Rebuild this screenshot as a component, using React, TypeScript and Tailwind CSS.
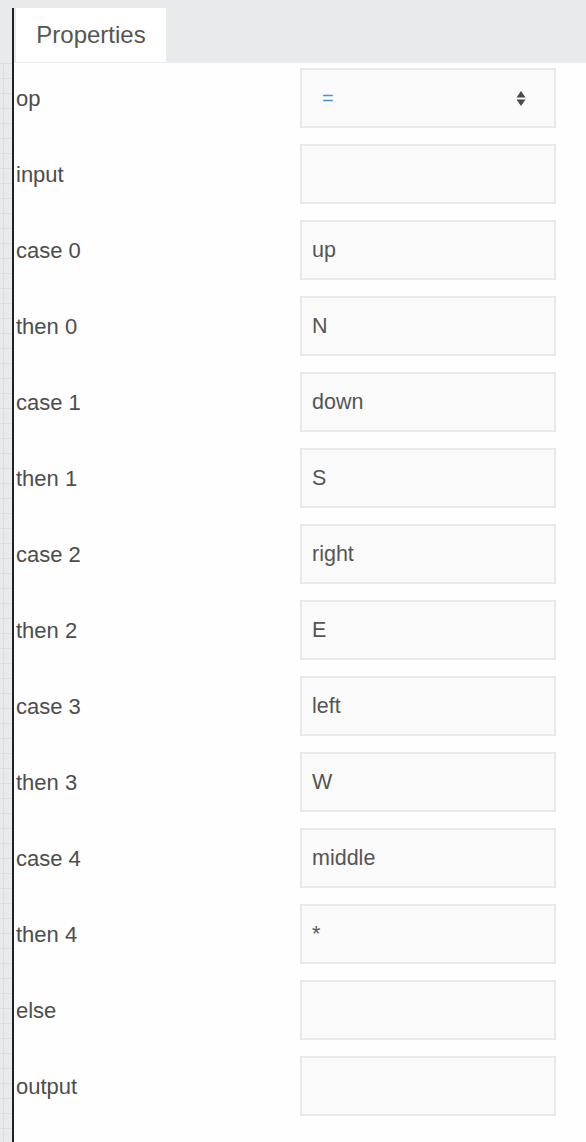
const rows: { label: string; value: string; select?: boolean }[] = [
  { label: 'op', value: '=', select: true },
  { label: 'input', value: '' },
  { label: 'case 0', value: 'up' },
  { label: 'then 0', value: 'N' },
  { label: 'case 1', value: 'down' },
  { label: 'then 1', value: 'S' },
  { label: 'case 2', value: 'right' },
  { label: 'then 2', value: 'E' },
  { label: 'case 3', value: 'left' },
  { label: 'then 3', value: 'W' },
  { label: 'case 4', value: 'middle' },
  { label: 'then 4', value: '*' },
  { label: 'else', value: '' },
  { label: 'output', value: '' },
];

const SortArrows = () => (
  <svg width="10" height="17" viewBox="0 0 10 17" className="text-[#4a4a4a]">
    <path d="M5 1 L9.5 7.5 H0.5 Z" fill="currentColor" />
    <path d="M0.5 9.5 H9.5 L5 16 Z" fill="currentColor" />
  </svg>
);

const Row = ({ label, value, select }: { label: string; value: string; select?: boolean }) => {
  return (
    <div className="flex items-center h-[60px]">
      <div className="w-[286px] pl-[2px] text-[22px] text-[#4d4d4d]">{label}</div>
      {select ? (
        <div className="w-[256px] h-[60px] border-2 border-[#e9e9e9] bg-[#fafafa] flex items-center pl-[20px] pr-[28px]">
          <span className="text-[20px] text-[#4a90e2] flex-grow">{value}</span>
          <SortArrows />
        </div>
      ) : (
        <div className="w-[256px] h-[60px] border-2 border-[#e9e9e9] bg-[#fafafa] flex items-center pl-[10px] text-[21.5px] text-[#555]">
          {value}
        </div>
      )}
    </div>
  );
};

export default function App() {
  return (
    <div
      className="w-[586px] h-[1142px] flex bg-[#e9eaec] overflow-hidden"
      style={{ fontFamily: '"Liberation Sans", Arial, sans-serif' }}
    >
      {/* canvas strip on the left */}
      <div className="w-[12px] flex flex-col">
        <div className="h-[63px]" />
        <div className="flex-grow bg-[#e9eaec] bg-[linear-gradient(#dddee1_1px,transparent_1px),linear-gradient(90deg,#dddee1_1px,transparent_1px)] bg-[length:15px_15px] bg-[position:3px_0px]" />
      </div>

      <div className="flex-grow flex flex-col pt-[8px]">
        <div className="flex-grow flex flex-col border-l-2 border-[#222]">
          {/* header */}
          <div className="h-[55px] bg-[#e9eaec] pl-[2px]">
            <div className="w-[150px] h-[54px] bg-white flex items-center justify-center text-[24px] text-[#555]">
              Properties
            </div>
          </div>

          {/* properties */}
          <div className="flex-grow bg-[#fefefe] pt-[5px] flex flex-col gap-[16px]">
            {rows.map((r) => (
              <Row key={r.label} {...r} />
            ))}
          </div>
        </div>
      </div>
    </div>
  );
}
